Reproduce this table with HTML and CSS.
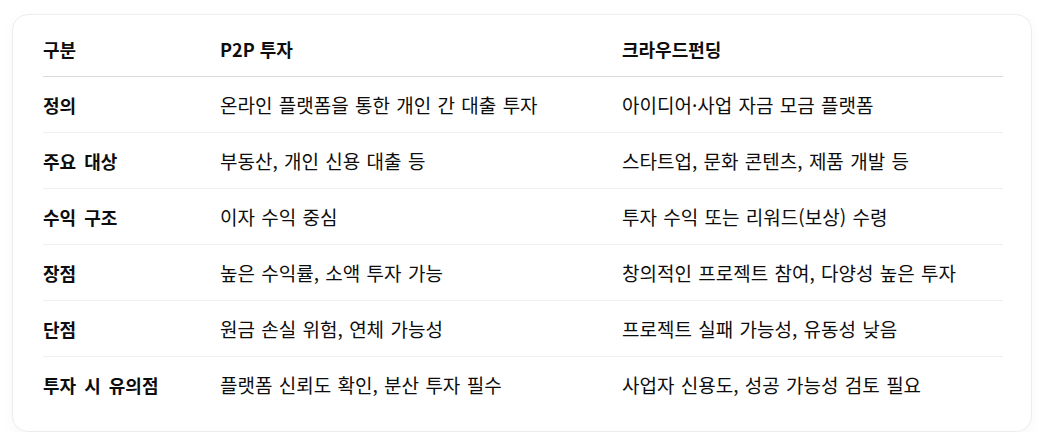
FILE: index.html
```html
<!DOCTYPE html>
<html lang="ko">
<head>
<meta charset="utf-8">
<link rel="stylesheet" href="styles.css">
</head>
<body>
<div class="card">
  <table class="compare">
    <colgroup>
      <col class="c1"><col class="c2"><col class="c3">
    </colgroup>
    <thead>
      <tr><th>구분</th><th>P2P 투자</th><th>크라우드펀딩</th></tr>
    </thead>
    <tbody>
      <tr><td class="key">정의</td><td>온라인 플랫폼을 통한 개인 간 대출 투자</td><td>아이디어·사업 자금 모금 플랫폼</td></tr>
      <tr><td class="key">주요 대상</td><td>부동산, 개인 신용 대출 등</td><td>스타트업, 문화 콘텐츠, 제품 개발 등</td></tr>
      <tr><td class="key">수익 구조</td><td>이자 수익 중심</td><td>투자 수익 또는 리워드(보상) 수령</td></tr>
      <tr><td class="key">장점</td><td>높은 수익률, 소액 투자 가능</td><td>창의적인 프로젝트 참여, 다양성 높은 투자</td></tr>
      <tr><td class="key">단점</td><td>원금 손실 위험, 연체 가능성</td><td>프로젝트 실패 가능성, 유동성 낮음</td></tr>
      <tr><td class="key">투자 시 유의점</td><td>플랫폼 신뢰도 확인, 분산 투자 필수</td><td>사업자 신용도, 성공 가능성 검토 필요</td></tr>
    </tbody>
  </table>
</div>
</body>
</html>
```

FILE: styles.css
```css
html, body {
  margin: 0;
  padding: 0;
  background: #ffffff;
}
body {
  padding: 14px 16px 0 12px;
  font-family: "Noto Sans CJK KR", "Noto Sans", sans-serif;
  color: #0d0d0d;
}
.card {
  width: 1020px;
  box-sizing: border-box;
  padding: 6px 30px 19px 30px;
  border: 1px solid #ededed;
  border-radius: 16px;
  background: #fff;
  box-shadow: 0 4px 14px rgba(0, 0, 0, 0.035);
}
.compare {
  width: 960px;
  border-collapse: collapse;
  table-layout: fixed;
  font-size: 19px;
  line-height: 24px;
}
.c1 { width: 177px; }
.c2 { width: 402px; }
.c3 { width: 381px; }
.compare th,
.compare td {
  text-align: left;
  padding: 16px 16px 15px 0;
  white-space: nowrap;
  vertical-align: middle;
}
.compare th {
  font-size: 18px;
  font-weight: 700;
  border-bottom: 1px solid #d9d9d9;
}
.compare td {
  font-weight: 400;
  word-spacing: 1px;
  border-bottom: 1px solid #f0f0f0;
}
.compare td.key {
  font-size: 18px;
  font-weight: 700;
  word-spacing: 3px;
}
.compare tbody tr:last-child td {
  border-bottom: none;
}
```
